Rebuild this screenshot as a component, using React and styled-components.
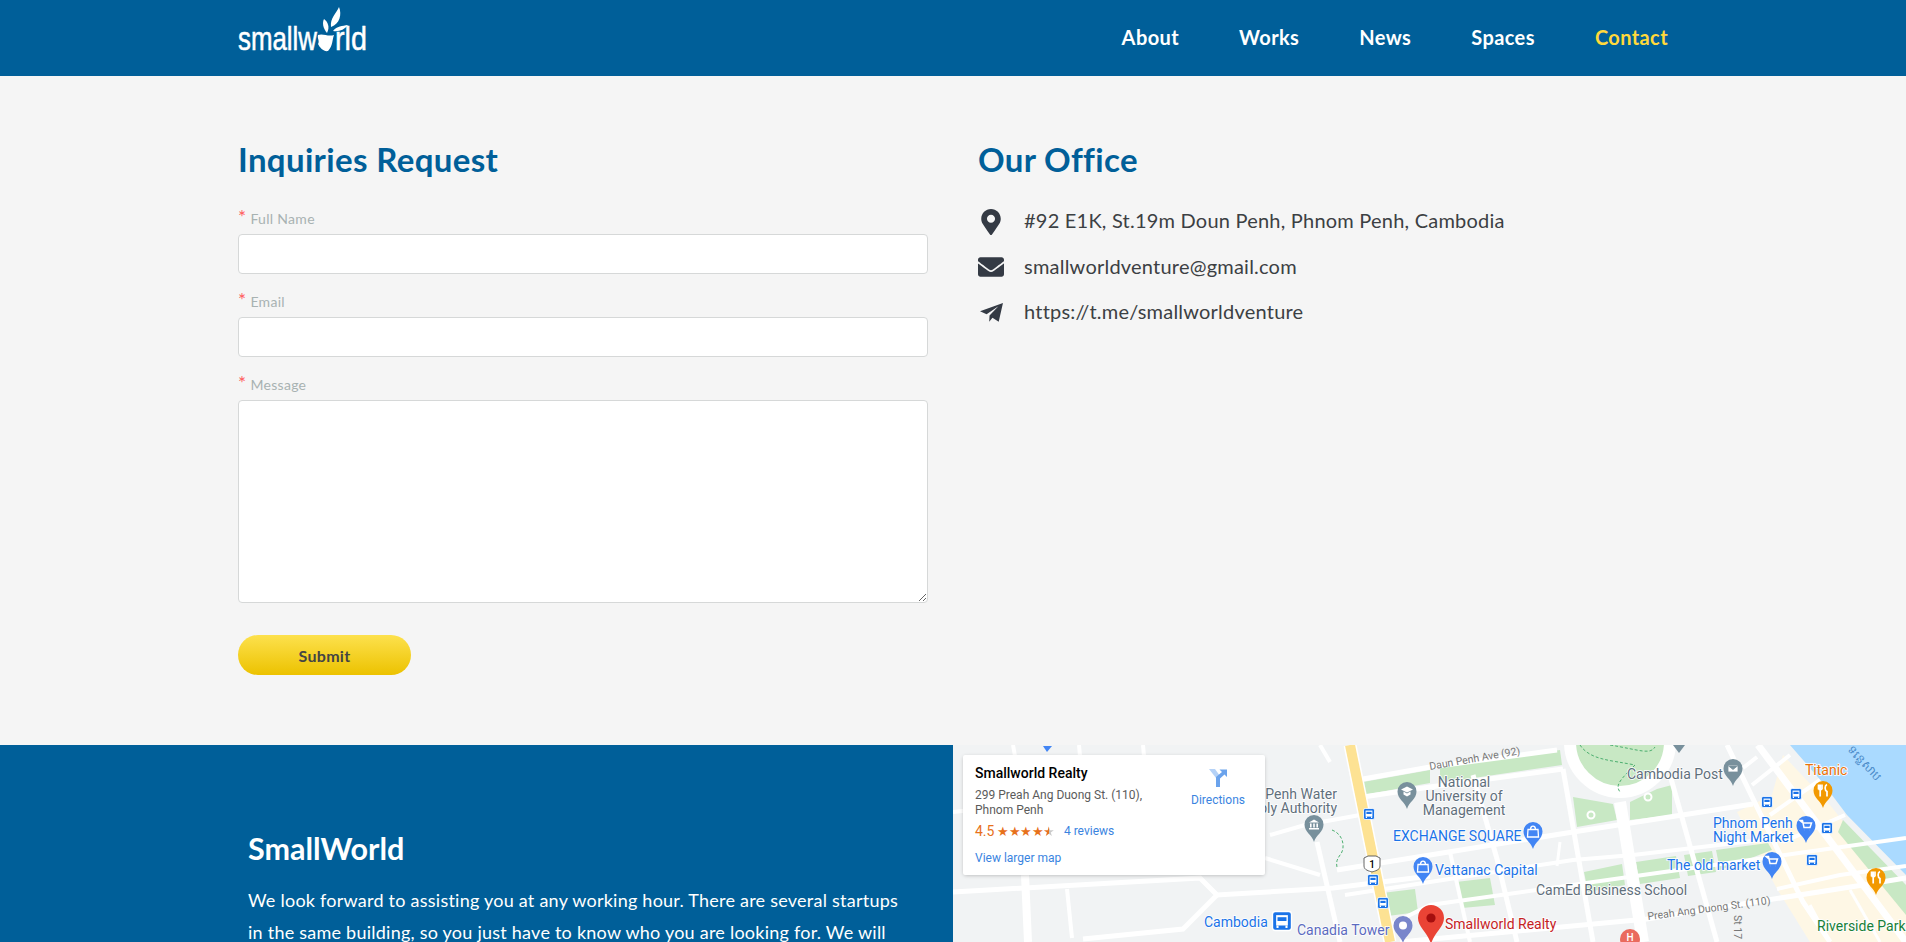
import React from "react";
import styled, { createGlobalStyle } from "styled-components";
import { FaMapMarkerAlt, FaEnvelope } from "react-icons/fa";

const BLUE = "#005f99";
const FONT = `"Lato", "Noto Sans", sans-serif`;

const navItems = ["About", "Works", "News", "Spaces", "Contact"];

const fields = [
  { label: "Full Name", type: "text" },
  { label: "Email", type: "email" },
];

const PlaneIcon = () => (
  <svg width="23" height="19" viewBox="28 312 70 58" fill="currentColor">
    <path d="M98 312 L28 337 L48 346 L84 322 L57 350 L56 369 L66 357 L85 369 Z" />
  </svg>
);

const office = [
  { icon: <FaMapMarkerAlt size={26} />, text: "#92 E1K, St.19m Doun Penh, Phnom Penh, Cambodia" },
  { icon: <FaEnvelope size={26} />, text: "smallworldventure@gmail.com" },
  { icon: <PlaneIcon />, text: "https://t.me/smallworldventure" },
];

// map geometry is in page coordinates, the viewBox takes care of the offset
const greens = [
  "1573,797 1613,804 1617,820 1577,827",
  "1630,802 1657,789 1672,785 1672,815 1630,820",
  "1363,782 1430,770 1430,783 1363,795",
  "1440,768 1560,750 1562,765 1440,783",
  "1382,893 1415,889 1418,912 1388,916",
  "1456,882 1490,878 1495,905 1462,908",
  "1584,872 1622,864 1625,885 1588,892",
  "1636,862 1676,856 1680,878 1640,884",
  "1684,855 1712,851 1716,872 1688,876",
  "1716,850 1768,843 1772,850 1720,870",
  "1843,820 1906,885 1906,915 1838,832",
];

const roads = [
  { d: "953,892 1200,878 1217,895 1333,888 1430,876", w: 5 },
  { d: "1217,895 1183,929 1083,939", w: 5 },
  { d: "953,812 1010,806", w: 4 },
  { d: "1025,875 1028,942", w: 8 },
  { d: "1067,889 1072,938", w: 4 },
  { d: "1013,745 1015,756", w: 4 },
  { d: "1079,745 1080,756", w: 4 },
  { d: "1143,745 1144,756", w: 4 },
  { d: "1320,745 1330,762", w: 4 },
  { d: "1317,842 1340,942", w: 5 },
  { d: "1265,858 1320,875", w: 4 },
  { d: "1270,835 1305,825 1360,815", w: 4 },
  { d: "1363,779 1430,767 1557,750", w: 5 },
  { d: "1363,797 1430,787 1563,769", w: 5 },
  { d: "1337,870 1430,855 1573,832 1753,804", w: 5 },
  { d: "1345,895 1430,882 1573,860 1633,855 1770,839", w: 4 },
  { d: "1390,925 1430,905 1650,874 1806,852 1906,838", w: 4 },
  { d: "1400,942 1647,919 1863,885 1906,878", w: 5 },
  { d: "1473,775 1497,859 1517,942", w: 5 },
  { d: "1450,852 1470,942", w: 4 },
  { d: "1563,769 1593,942", w: 5 },
  { d: "1620,802 1643,942", w: 12 },
  { d: "1670,775 1717,942", w: 5 },
  { d: "1727,745 1803,902 1830,942", w: 5 },
  { d: "1758,745 1906,942", w: 7 },
  { d: "1743,768 1757,757", w: 4 },
  { d: "1752,785 1790,755", w: 4 },
  { d: "1770,815 1820,780", w: 4 },
  { d: "1783,842 1845,815", w: 4 },
  { d: "1777,889 1840,875 1906,866", w: 4 },
  { d: "1810,905 1830,942", w: 3 },
  { d: "1850,890 1880,942", w: 3 },
  { d: "1560,842 1557,866", w: 3 },
];

const labels = [
  { x: 1337, y: 799, text: "Penh Water", color: "#5f6f7c", anchor: "end" },
  { x: 1337, y: 813, text: "ply Authority", color: "#5f6f7c", anchor: "end" },
  { x: 1464, y: 787, text: "National", color: "#5f6f7c", anchor: "middle" },
  { x: 1464, y: 801, text: "University of", color: "#5f6f7c", anchor: "middle" },
  { x: 1464, y: 815, text: "Management", color: "#5f6f7c", anchor: "middle" },
  { x: 1393, y: 841, text: "EXCHANGE SQUARE", color: "#1a73e8" },
  { x: 1435, y: 875, text: "Vattanac Capital", color: "#1a73e8" },
  { x: 1536, y: 895, text: "CamEd Business School", color: "#5f6f7c" },
  { x: 1627, y: 779, text: "Cambodia Post", color: "#5f6f7c" },
  { x: 1805, y: 775, text: "Titanic", color: "#e8710a" },
  { x: 1713, y: 828, text: "Phnom Penh", color: "#1a73e8" },
  { x: 1713, y: 842, text: "Night Market", color: "#1a73e8" },
  { x: 1667, y: 870, text: "The old market", color: "#1a73e8" },
  { x: 1817, y: 931, text: "Riverside Park", color: "#188038" },
  { x: 1445, y: 929, text: "Smallworld Realty", color: "#c5221f" },
  { x: 1204, y: 927, text: "Cambodia", color: "#1a73e8" },
  { x: 1297, y: 935, text: "Canadia Tower", color: "#5c6bc0" },
];

const pins = [
  { x: 1314, y: 842, color: "#78909c", glyph: "bank" },
  { x: 1407, y: 809, color: "#78909c", glyph: "grad" },
  { x: 1533, y: 849, color: "#4285f4", glyph: "bag" },
  { x: 1423, y: 884, color: "#4285f4", glyph: "bag" },
  { x: 1733, y: 786, color: "#78909c", glyph: "mail" },
  { x: 1823, y: 808, color: "#f29900", glyph: "food" },
  { x: 1876, y: 895, color: "#f29900", glyph: "food" },
  { x: 1806, y: 843, color: "#4285f4", glyph: "cart" },
  { x: 1772, y: 879, color: "#4285f4", glyph: "cart" },
  { x: 1403, y: 943, color: "#7986cb", glyph: "tower" },
];

const buses = [
  [1369, 814], [1373, 880], [1383, 903], [1796, 794], [1767, 802], [1827, 828], [1812, 860],
];

const PinGlyph = ({ kind }) => {
  if (kind === "bank") return <path d="M-5 -2 L0 -5 L5 -2 Z M-4 -1 h1.6 v4 h-1.6 Z M-.8 -1 h1.6 v4 h-1.6 Z M2.4 -1 h1.6 v4 h-1.6 Z M-5 3.5 h10 v1.4 h-10 Z" fill="#fff" />;
  if (kind === "grad") return <path d="M0 -5 L6 -2 L0 1 L-6 -2 Z M-3.5 0 L0 2 L3.5 0 V3 L0 5 L-3.5 3 Z" fill="#fff" />;
  if (kind === "bag") return <path d="M-5 -2 H5 L5.5 5.5 H-5.5 Z M-2.5 -2 C-2.5 -6.5 2.5 -6.5 2.5 -2" fill="none" stroke="#fff" strokeWidth="1.3" />;
  if (kind === "mail") return <path d="M-5 -3.5 H5 V3.5 H-5 Z M-5 -3 L0 1 L5 -3" fill="#fff" stroke="#78909c" strokeWidth=".8" />;
  if (kind === "food") return <path d="M-4.5 -6 V-1 M-2.8 -6 V6 M-1 -6 V-1 M-4.5 -1 H-1 M4 -6 C1.5 -5 1.5 0 4 1 V6" fill="none" stroke="#fff" strokeWidth="1.7" />;
  if (kind === "cart") return <path d="M-6 -5 H-3.5 L-2 2 H4 L5.5 -2.5 H-3 Z M-1.5 4.5 h.1 M3.5 4.5 h.1" fill="none" stroke="#fff" strokeWidth="1.5" />;
  return <circle r="4" fill="#fff" />;
};

const Pin = ({ x, y, color, glyph }) => (
  <g transform={`translate(${x} ${y})`}>
    <path d="M0 0 C-2 -7 -9.5 -10 -9.5 -17.5 A9.5 9.5 0 0 1 9.5 -17.5 C9.5 -10 2 -7 0 0 Z" fill={color} />
    <g transform="translate(0 -17.5)">
      <PinGlyph kind={glyph} />
    </g>
  </g>
);

const Bus = ({ x, y, size = 11 }) => (
  <g transform={`translate(${x} ${y}) scale(${size / 11})`}>
    <rect x="-5.5" y="-5.5" width="11" height="11" rx="1.6" fill="#1a73e8" stroke="#fff" strokeWidth=".8" />
    <path d="M-3.4 -3.4 H3.4 V2.6 H-3.4 Z" fill="#fff" />
    <path d="M-2.6 -2.2 H2.6 V0 H-2.6 Z" fill="#1a73e8" />
    <path d="M-2.6 2.6 V4 M2.6 2.6 V4" stroke="#fff" strokeWidth="1.2" />
  </g>
);

const MapDrawing = () => (
  <MapSvg viewBox="953 745 953 197" preserveAspectRatio="none">
    <rect x="953" y="745" width="953" height="197" fill="#f1f3f4" />
    <polygon points="1783,755 1830,805 1906,900 1906,942 1810,942 1777,889 1737,812 1772,795" fill="#fef7e5" />
    <polygon points="1790,745 1906,745 1906,875 1847,815 1823,783" fill="#aadaff" />
    {greens.map((g) => <polygon key={g} points={g} fill="#c8e8c4" />)}
    <circle cx="1620" cy="742" r="50" fill="#c8e8c4" stroke="#fff" strokeWidth="12" />
    {roads.map((r) => <polyline key={r.d} points={r.d} fill="none" stroke="#fff" strokeWidth={r.w} />)}
    <path d="M1580 745 C1590 760 1610 760 1635 765 C1620 780 1615 785 1620 792 M1610 745 C1640 750 1650 755 1655 747" fill="none" stroke="#4caf6f" strokeWidth="1" strokeDasharray="3 2" />
    <path d="M1332 830 C1345 835 1345 850 1340 855 C1335 862 1337 865 1337 868" fill="none" stroke="#4caf6f" strokeWidth="1" strokeDasharray="3 2" />
    <circle cx="1591" cy="815" r="3.5" fill="#c8e8c4" stroke="#fff" strokeWidth="2" />
    <circle cx="1648" cy="797" r="3.5" fill="#c8e8c4" stroke="#fff" strokeWidth="2" />
    <polyline points="1350,745 1390,942" fill="none" stroke="#fff" strokeWidth="13" />
    <polyline points="1350,745 1390,942" fill="none" stroke="#fde293" strokeWidth="10" />
    <polygon points="1043,746 1052,746 1047,752" fill="#4285f4" />
    <path d="M1673 745 H1685 L1679 753 Z" fill="#78909c" />
    {labels.map((l) => (
      <MapLabel key={l.text} x={l.x} y={l.y} textAnchor={l.anchor || "start"} fill={l.color}>{l.text}</MapLabel>
    ))}
    <StreetLabel transform="rotate(-10 1430 770)" x="1430" y="770">Daun Penh Ave (92)</StreetLabel>
    <StreetLabel transform="rotate(-7.5 1648 920)" x="1648" y="920">Preah Ang Duong St. (110)</StreetLabel>
    <StreetLabel transform="rotate(90 1734 915)" x="1734" y="915">St 17</StreetLabel>
    <RiverLabel transform="rotate(47 1847 750)" x="1847" y="750">ទន្លេសាប</RiverLabel>
    {pins.map((p) => <Pin key={`${p.x}-${p.y}`} {...p} />)}
    {buses.map(([x, y]) => <Bus key={`${x}-${y}`} x={x} y={y} />)}
    <Bus x={1282} y={921} size={19} />
    <g transform="translate(1372 864)">
      <path d="M-8 -6 L-4 -8 H4 L8 -6 V2 C8 6 3 7 0 8 C-3 7 -8 6 -8 2 Z" fill="#fff" stroke="#555" strokeWidth=".9" />
      <ShieldNumber y="4" textAnchor="middle">1</ShieldNumber>
    </g>
    <circle cx="1630" cy="939" r="10" fill="#ea6a5e" />
    <ShieldNumber x="1630" y="941" textAnchor="middle" fill="#fff">H</ShieldNumber>
    <g transform="translate(1431 905)">
      <path d="M0 39 C-3 28 -13 22 -13 13 A13 13 0 0 1 13 13 C13 22 3 28 0 39 Z" fill="#ea4335" />
      <circle cy="13" r="4.6" fill="#a50e0e" />
    </g>
  </MapSvg>
);

const Logo = () => (
  <LogoSvg viewBox="0 0 130 56">
    <LogoText x="0" y="46" textLength="79" lengthAdjust="spacingAndGlyphs">smallw</LogoText>
    <LogoText x="97" y="46" textLength="32" lengthAdjust="spacingAndGlyphs">rld</LogoText>
    <g fill="#fff">
      <path d="M80 31 C85 29 90 33 96 31 C94 36 95 42 90 47 C86 48 82 44 80 40 C82 37 79 34 80 31 Z" />
      <path d="M93 23 C92 14 98 10 101 3 C104 10 102 20 93 23 Z" />
      <path d="M89 29 C85 24 84 19 86 15 C90 18 92 23 89 29 Z" />
      <path d="M95 27 C99 22 104 22 110 21 C106 26 101 28 95 27 Z" />
    </g>
  </LogoSvg>
);

export default function App() {
  return (
    <>
      <GlobalStyle />
      <Header>
        <Logo />
        <Nav>
          {navItems.map((item) => (
            <NavLink key={item} href="#" $active={item === "Contact"}>{item}</NavLink>
          ))}
        </Nav>
      </Header>
      <Main>
        <FormColumn>
          <Heading>Inquiries Request</Heading>
          {fields.map((f) => (
            <Field key={f.label}>
              <Label>{f.label}</Label>
              <Input type={f.type} />
            </Field>
          ))}
          <Field>
            <Label>Message</Label>
            <TextArea />
          </Field>
          <SubmitButton type="button">Submit</SubmitButton>
        </FormColumn>
        <OfficeColumn>
          <Heading>Our Office</Heading>
          <OfficeList>
            {office.map(({ icon, text }) => (
              <OfficeRow key={text}>
                <IconCell>{icon}</IconCell>
                {text}
              </OfficeRow>
            ))}
          </OfficeList>
        </OfficeColumn>
      </Main>
      <Footer>
        <FooterText>
          <FooterTitle>SmallWorld</FooterTitle>
          <FooterBody>
            We look forward to assisting you at any working hour. There are several startups
            in the same building, so you just have to know who you are looking for. We will
          </FooterBody>
        </FooterText>
        <MapPane>
          <MapDrawing />
          <InfoCard>
            <InfoMain>
              <PlaceName>Smallworld Realty</PlaceName>
              <PlaceAddress>299 Preah Ang Duong St. (110),<br />Phnom Penh</PlaceAddress>
              <RatingRow>
                <Score>4.5</Score>
                <Stars>★★★★<HalfStar>★</HalfStar></Stars>
                <MapLink>4 reviews</MapLink>
              </RatingRow>
              <LargerMap>View larger map</LargerMap>
            </InfoMain>
            <Directions>
              <svg width="20" height="20" viewBox="0 0 20 20">
                <path d="M1 1 H7 L12 8 V19 H8 V10 Z" fill="#b5d2f7" />
                <path d="M8 19 V9 L14 4 L11.5 1.5 H19 V9 L16.5 6.5 L12 10.5 V19 Z" fill="#6ba3ec" />
              </svg>
              <MapLink>Directions</MapLink>
            </Directions>
          </InfoCard>
        </MapPane>
      </Footer>
    </>
  );
}

const GlobalStyle = createGlobalStyle`
  html, body {
    margin: 0;
    padding: 0;
    background: #f5f5f5;
    font-family: ${FONT};
    overflow: hidden;
  }
  * { box-sizing: border-box; }
`;

const Header = styled.header`
  height: 76px;
  background: ${BLUE};
  padding: 0 238px;
  display: flex;
  align-items: center;
  justify-content: space-between;
`;

const LogoSvg = styled.svg`
  width: 130px;
  height: 56px;
  margin-top: -12px;
  display: block;
`;

const LogoText = styled.text`
  font-family: "Liberation Sans Narrow", "Liberation Sans", sans-serif;
  font-size: 33px;
  fill: #fff;
  stroke: #fff;
  stroke-width: 0.5px;
`;

const Nav = styled.nav`
  display: flex;
  gap: 60px;
  margin-top: -3px;
`;

const NavLink = styled.a`
  color: ${(p) => (p.$active ? "#ffd93b" : "#fff")};
  font-size: 20px;
  font-weight: 700;
  letter-spacing: 0.4px;
  text-decoration: none;
`;

const Main = styled.main`
  height: 669px;
  padding: 62px 238px 0;
  display: flex;
  gap: 50px;
`;

const FormColumn = styled.section`
  width: 690px;
`;

const OfficeColumn = styled.section`
  flex: 1;
`;

const Heading = styled.h2`
  margin: 0 0 30px;
  height: 42px;
  line-height: 42px;
  font-size: 33px;
  font-weight: 700;
  letter-spacing: 0.35px;
  color: ${BLUE};
`;

const Field = styled.div`
  margin-bottom: 19px;
`;

const Label = styled.label`
  display: block;
  height: 22px;
  line-height: 14px;
  margin-bottom: 2px;
  font-size: 14px;
  letter-spacing: 0.3px;
  color: #a8b2b2;
  &::before {
    content: "*";
    color: #ff5c5c;
    font-size: 19px;
    margin-right: 4px;
  }
`;

const Input = styled.input`
  display: block;
  width: 100%;
  height: 40px;
  background: #fff;
  border: 1px solid #d6d8d8;
  border-radius: 4px;
`;

const TextArea = styled.textarea`
  display: block;
  width: 100%;
  height: 203px;
  background: #fff;
  border: 1px solid #d6d8d8;
  border-radius: 4px;
`;

const SubmitButton = styled.button`
  display: block;
  width: 173px;
  height: 40px;
  margin-top: 32px;
  border: 0;
  border-radius: 20px;
  background: linear-gradient(#fde14d, #ecc200);
  color: #444;
  font-family: ${FONT};
  font-size: 16px;
  font-weight: 700;
  letter-spacing: 0.3px;
`;

const OfficeList = styled.div`
  display: flex;
  flex-direction: column;
  gap: 15.5px;
  margin-top: -5px;
`;

const OfficeRow = styled.div`
  display: flex;
  align-items: center;
  height: 30px;
  font-size: 20px;
  letter-spacing: 0.22px;
  color: #3c4043;
`;

const IconCell = styled.span`
  width: 26px;
  margin-right: 20px;
  padding-top: 3px;
  flex: none;
  display: flex;
  justify-content: center;
  color: #343a44;
`;

const Footer = styled.footer`
  height: 197px;
  display: flex;
  overflow: hidden;
`;

const FooterText = styled.div`
  width: 953px;
  flex: none;
  background: ${BLUE};
  padding: 85px 0 0 248px;
  color: #fff;
`;

const FooterTitle = styled.h3`
  margin: 0 0 18px;
  font-size: 30.5px;
  line-height: 36px;
  font-weight: 700;
`;

const FooterBody = styled.p`
  margin: 0;
  width: 665px;
  font-size: 18px;
  letter-spacing: 0.24px;
  line-height: 32px;
`;

const MapPane = styled.div`
  flex: 1;
  position: relative;
`;

const MapSvg = styled.svg`
  display: block;
  width: 100%;
  height: 100%;
`;

const MapLabel = styled.text`
  font-family: Roboto, sans-serif;
  font-size: 14px;
  paint-order: stroke;
  stroke: #fff;
  stroke-width: 1.5px;
`;

const StreetLabel = styled.text`
  font-family: Roboto, sans-serif;
  font-size: 10.5px;
  fill: #777;
`;

const RiverLabel = styled.text`
  font-family: "Noto Sans", sans-serif;
  font-size: 12px;
  fill: #4a8ac9;
`;

const ShieldNumber = styled.text`
  font-family: Roboto, sans-serif;
  font-size: 10px;
  font-weight: 500;
`;

const InfoCard = styled.div`
  position: absolute;
  left: 10px;
  top: 10px;
  width: 302px;
  height: 120px;
  padding: 9px 19px 9px 12px;
  display: flex;
  justify-content: space-between;
  background: #fff;
  border-radius: 2px;
  box-shadow: 0 1px 4px -1px rgba(0, 0, 0, 0.3);
  font-family: Roboto, sans-serif;
  font-size: 12px;
  color: #5b5b5b;
`;

const InfoMain = styled.div`
  width: 200px;
`;

const PlaceName = styled.div`
  font-size: 14px;
  font-weight: 500;
  color: #000;
  line-height: 18px;
  margin-bottom: 6px;
`;

const PlaceAddress = styled.div`
  line-height: 15px;
`;

const RatingRow = styled.div`
  display: flex;
  align-items: center;
  height: 20px;
  margin-top: 3px;
`;

const Score = styled.span`
  color: #e7711b;
  font-size: 14px;
  margin-right: 3px;
`;

const Stars = styled.span`
  color: #e7711b;
  font-size: 13px;
  letter-spacing: -0.5px;
  margin-right: 9px;
`;

const HalfStar = styled.span`
  background: linear-gradient(90deg, #e7711b 50%, #c8c8c8 50%);
  -webkit-background-clip: text;
  background-clip: text;
  color: transparent;
`;

const MapLink = styled.span`
  color: #3a84df;
  font-size: 12px;
`;

const LargerMap = styled(MapLink)`
  display: block;
  margin-top: 10px;
`;

const Directions = styled.div`
  width: 56px;
  padding-top: 4px;
  display: flex;
  flex-direction: column;
  align-items: center;
  gap: 5px;
`;
